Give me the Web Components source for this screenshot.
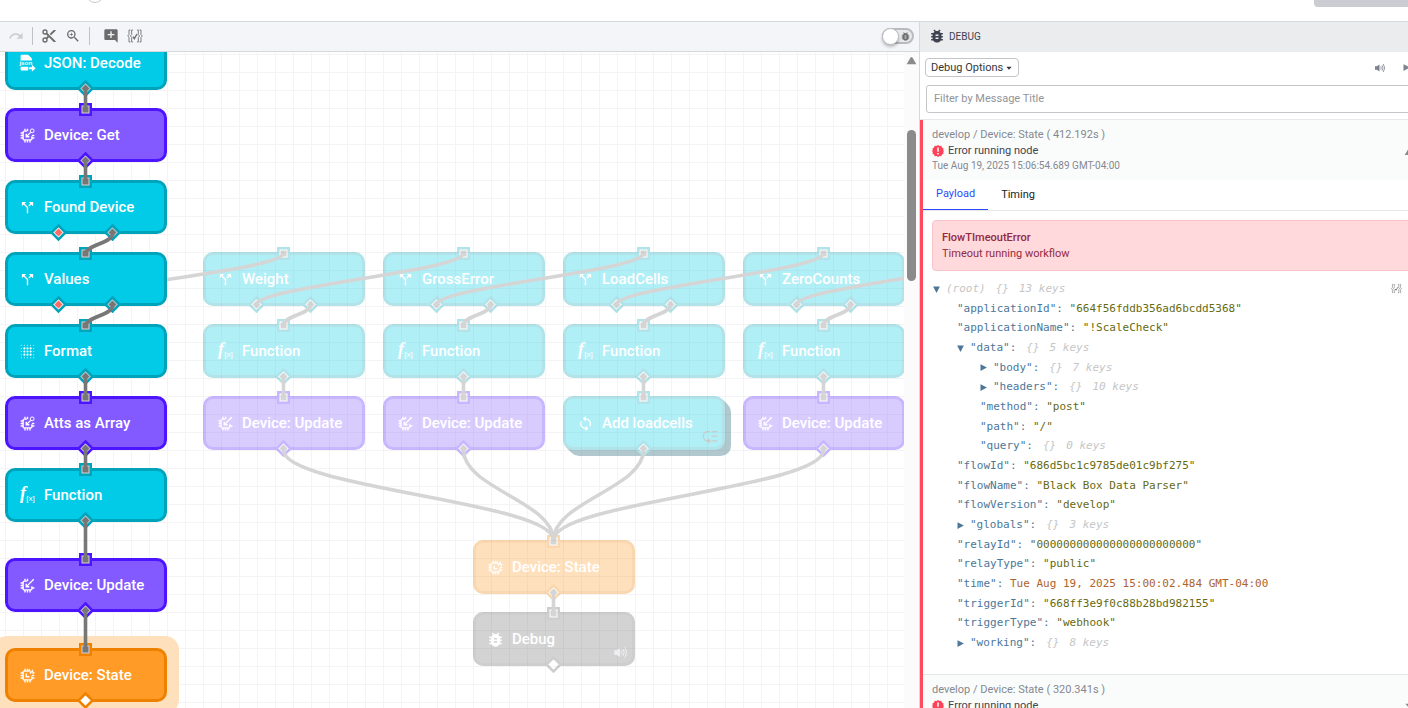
<!DOCTYPE html>
<html lang="en">
<head>
<meta charset="utf-8">
<title>Workflow editor</title>
<style>
  html, body { height: 100%; margin: 0; }
  body {
    font-family: Roboto, "Noto Sans", sans-serif;
    font-size: 11px;
    color: #3f4350;
    overflow: hidden;
  }
</style>
</head>
<body>
<workflow-app></workflow-app>

<script>
const ICONS = {
  redo: '<path d="M18.4 10.6C16.55 9 14.15 8 11.5 8 6.85 8 2.92 11.03 1.54 15.22L3.9 16C4.95 12.81 7.95 10.5 11.5 10.5c1.95 0 3.73.72 5.12 1.88L13 16h9V7z"/>',
  cut: '<path d="M19 3l-6 6 2 2 7-7V3M12 12.5a.5.5 0 1 1 0-1 .5.5 0 0 1 0 1M6 20a2 2 0 1 1 0-4 2 2 0 0 1 0 4M6 8a2 2 0 1 1 0-4 2 2 0 0 1 0 4m3.64-.36C9.87 7.14 10 6.59 10 6a4 4 0 1 0-4 4c.59 0 1.14-.13 1.64-.36L10 12l-2.36 2.36C7.14 14.13 6.59 14 6 14a4 4 0 1 0 4 4c0-.59-.13-1.14-.36-1.64L12 14l7 7h3v-1z"/>',
  zoom: '<path d="M15.5 14l5 5-1.5 1.5-5-5v-.79l-.27-.28A6.5 6.5 0 1 1 14.43 13.73l.28.27h.79M9.5 14a4.5 4.5 0 1 0 0-9 4.5 4.5 0 0 0 0 9m2.5-4h-2v2H9v-2H7V9h2V7h1v2h2z"/>',
  comment: '<path d="M22 4c0-1.1-.9-2-2-2H4c-1.1 0-2 .9-2 2v12c0 1.1.9 2 2 2h14l4 4V4zm-5 7h-4v4h-2v-4H7V9h4V5h2v4h4v2z"/>',
  braces: '<g fill="none" stroke="currentColor" stroke-width="1.3"><path d="M5 3H3v7l-2 2 2 2v7h2M9 3H7v7l-2 2 2 2v7h2M19 3h2v7l2 2-2 2v7h-2M15 3h2v7l2 2-2 2v7h-2"/><path d="M9 13l2 3 4-7" stroke-width="2"/></g>',
  bug: '<path transform="translate(-3 -3) scale(1.25)" d="M14 12h-4v-2h4m0 6h-4v-2h4m6-6h-2.81a6 6 0 0 0-1.82-1.96L17 4.41 15.59 3l-2.17 2.17a6 6 0 0 0-2.83 0L8.41 3 7 4.41l1.62 1.63A6 6 0 0 0 6.81 8H4v2h2.09A6 6 0 0 0 6 11v1H4v2h2v1c0 .34.04.67.09 1H4v2h2.81a6 6 0 0 0 10.38 0H20v-2h-2.09c.05-.33.09-.66.09-1v-1h2v-2h-2v-1c0-.34-.04-.67-.09-1H20z"/>',
  split: '<path d="M14 3l2.6 2.6-3.2 3.2 1.5 1.5 3.2-3.2L21 10V3M10 3H3v7l2.7-2.7 5.2 5.2V21h2.2v-9.4L7.3 5.6"/>',
  sync: '<path transform="translate(-1 -1) scale(1.1)" d="M12 18a6 6 0 0 1-6-6c0-1 .25-1.97.7-2.8L5.24 7.74A8 8 0 0 0 12 20v3l4-4-4-4m0-11V1L8 5l4 4V6a6 6 0 0 1 5.3 8.8l1.46 1.46A8 8 0 0 0 12 4z"/>',
  volume: '<path d="M2 8.5v7h3.5L11 19V5L5.5 8.5z"/><g fill="none" stroke="currentColor" stroke-width="1.6"><path d="M13.5 9q2 3 0 6M16 6.5q4 5.5 0 11M18.5 4q6 8 0 16"/></g>',
  play: '<path d="M4 3v18l17-9z"/>',
  blur: '<g>' + [2, 7, 12, 17, 22].map((y, r) => [2, 7, 12, 17, 22].map((x, c) => {
    const far = Math.max(Math.abs(r - 2), Math.abs(c - 2));
    return `<circle cx="${x}" cy="${y}" r="${far === 2 ? 0.8 : 1.7}"/>`;
  }).join('')).join('') + '</g>',
  fx: '<text x="0" y="18" font-family="Liberation Serif, serif" font-style="italic" font-weight="700" font-size="29">f</text><text x="10" y="21" font-family="Liberation Sans, sans-serif" font-size="13">[x]</text>',
  json: '<path d="M2 -2h11l6 6v3H1V-1zM1 17h12v6H2l-1-1z"/><path d="M14 18h5v-4l6 5.5-6 5.5v-4h-5z"/><text x="-1" y="15" font-family="Liberation Sans, sans-serif" font-weight="700" font-size="10">json</text>',
  list: '<g fill="none" stroke="currentColor" stroke-width="2"><path d="M11 4H7a6 7 0 0 0 0 15h3M14 4h9M14 11.5h9M14 19h9"/></g><path d="M8 14.5l5 4.5-5 4.5z"/>',
  error: '<path d="M12 0l3 2 3.5-.5L20 5l3 2-.5 3.5L24 12l-1.5 2 .5 3.5-3 1.5-1.5 3.5L15 22l-3 2-3-2-3.5.5L4 19l-3-1.5.5-3.5L0 12l1.5-1.5L1 7l3-2 1.5-3.5L9 2z"/><path d="M10.5 5h3v8.500h-3zM10.5 16h3v3h-3z" fill="#fff"/>',
  caretUp: '<path d="M3 19L10 7q2-3 4 0l7 12z"/>',
  caretDown: '<path d="M4 8h16l-8 9z"/>',
  fold: '<path d="M3 4h18l-9 17z"/>'
};

// every device icon is the same chip, with a different mark in its top corner
const chip = mark => `<g fill="none" stroke="currentColor" stroke-width="2.2"><path d="M11 5H7a2 2 0 0 0-2 2v10a2 2 0 0 0 2 2h10a2 2 0 0 0 2-2v-4M10 9v5h5M8 5V1M12 5V1M8 19v4M12 19v4M16 19v4M5 8H1M5 12H1M5 16H1M19 16h4"/>${mark}</g>`;
ICONS.get = chip('<path d="M11 13l6-6"/><circle cx="19.5" cy="4.5" r="3" stroke-width="1.6"/><path d="M19 12h4"/>');
ICONS.update = chip('<path d="M11 13L22 2"/>');
ICONS.state = chip('<path d="M12 6l3-3 2 5 3-4 1 5 2-2M19 12h4" stroke-width="1.8"/>');

class UiIcon extends HTMLElement {
  connectedCallback() {
    if (this.shadowRoot) return;
    this.attachShadow({ mode: 'open' }).innerHTML = `
      <style>
        :host { display: inline-block; width: 16px; height: 16px; flex: none; white-space: normal; }
        svg { display: block; width: 100%; height: 100%; fill: currentColor; overflow: visible; }
      </style>
      <svg viewBox="0 0 24 24" aria-hidden="true">${ICONS[this.getAttribute('name')]}</svg>`;
  }
}
customElements.define('ui-icon', UiIcon);

class EditorToolbar extends HTMLElement {
  constructor() {
    super();
    this.attachShadow({ mode: 'open' }).innerHTML = `
      <style>
        :host {
          display: flex;
          align-items: center;
          box-sizing: border-box;
          height: 30px;
          padding: 0 5px 1px 0;
          background: #f4f5f8;
          border-bottom: 1px solid #d6d8dc;
          color: #6b6b6b;
        }
        .group { display: flex; padding: 0 4px; }
        .group.wide { padding-left: 9px; }
        .group:first-child { padding: 0 10px 0 0; }
        button {
          display: flex;
          justify-content: center;
          width: 24px;
          padding: 0;
          border: 0;
          background: none;
          color: inherit;
        }
        button:disabled { color: #cdced1; }
        .group:first-child button { width: 22px; }
        .line { width: 1px; height: 18px; background: #bfc1c4; }
        label {
          position: relative;
          display: flex;
          align-items: center;
          justify-content: flex-end;
          box-sizing: border-box;
          width: 32px;
          height: 16px;
          margin-left: auto;
          padding-right: 2px;
          border: 2px solid #b9babd;
          border-radius: 8px;
          background: #e9eaec;
        }
        label ui-icon { width: 9px; height: 9px; }
        input {
          position: absolute;
          left: -2px;
          top: -2px;
          width: 17px;
          height: 17px;
          margin: 0;
          appearance: none;
          border: 1px solid #b9babd;
          border-radius: 50%;
          background: #fff;
          box-shadow: 0 2px 3px rgba(0, 0, 0, .25);
        }
      </style>
      <div class="group"><button disabled aria-label="Redo"><ui-icon name="redo"></ui-icon></button></div>
      <div class="line"></div>
      <div class="group">
        <button aria-label="Cut"><ui-icon name="cut"></ui-icon></button>
        <button aria-label="Zoom in"><ui-icon name="zoom"></ui-icon></button>
      </div>
      <div class="line"></div>
      <div class="group wide">
        <button aria-label="Add note"><ui-icon name="comment"></ui-icon></button>
        <button aria-label="Variables"><ui-icon name="braces"></ui-icon></button>
      </div>
      <label><input type="checkbox" aria-label="Live debug"><ui-icon name="bug"></ui-icon></label>`;
  }
}
customElements.define('editor-toolbar', EditorToolbar);

class FlowNode extends HTMLElement {
  connectedCallback() {
    if (this.shadowRoot) return;
    this.style.left = `${this.getAttribute('x')}px`;
    this.style.top = `${this.getAttribute('y')}px`;
    const outs = (this.getAttribute('outs') || 'on').split(' ');
    const badge = this.getAttribute('badge');
    const root = this.attachShadow({ mode: 'open' });
    root.innerHTML = `
      <style>
        :host {
          --fill: #02cbe7;
          --edge: #00a4ba;
          --ring: #d4d4d4;
          position: absolute;
          width: 162px;
          height: 54px;
        }
        :host([kind=device]) { --fill: #825aff; --edge: #4d14ff; }
        :host([kind=output]) { --fill: #ff9b26; --edge: #ee8100; }
        :host([kind=debug]) { --fill: #707070; --edge: #606060; }
        :host([ghost]) { --ring: #fff; opacity: .3; }
        :host([selected])::before {
          content: "";
          position: absolute;
          inset: -12px;
          border-radius: 14px;
          background: #ffe0bd;
        }
        .card {
          position: relative;
          display: flex;
          align-items: center;
          gap: 9px;
          box-sizing: border-box;
          height: 100%;
          padding-left: 12px;
          border: 3px solid var(--edge);
          border-radius: 10px;
          background: var(--fill);
          color: #fff;
          font-size: 15px;
          font-weight: 500;
          white-space: nowrap;
        }
        :host([stacked]) .card {
          box-shadow: 1px 1px #005060, 2px 2px #005060, 3px 3px #005060,
            4px 4px #005060, 5px 5px #005060, 6px 6px #005060;
        }
        .card ui-icon { width: 15px; height: 15px; }
        .card .badge {
          position: absolute;
          right: 4px;
          bottom: 3px;
          color: ${badge === 'list' ? '#555' : '#cfd2dc'};
        }
        svg { position: absolute; width: 17px; height: 17px; stroke: var(--edge); stroke-width: 2.5; fill: var(--ring); }
        svg .dot { stroke: none; fill: #777; }
        svg .empty { fill: #fff; }
        svg .light { fill: #fff; }
        svg .red { fill: #ff6b62; }
        .in { left: 72px; top: -7px; }
        .out { left: 72px; top: 44px; }
        .pair.out { left: 45px; }
        .pair.out ~ .pair.out { left: 99px; }
      </style>
      <div class="card">
        <ui-icon name="${this.getAttribute('icon')}"></ui-icon>
        <slot></slot>
        ${badge ? `<ui-icon class="badge" name="${badge}"></ui-icon>` : ''}
      </div>
      <svg class="in" viewBox="0 0 17 17"><path d="M3.25 3.25h10.5v10.5h-10.5z"/><path class="dot" d="M5.5 5.5h6v6h-6z"/></svg>
      ${outs.map(out => `
        <svg class="out ${outs.length > 1 ? 'pair' : ''}" viewBox="0 0 17 17">
          <path class="${out === 'on' ? '' : 'light'}" d="M8.5 1.5l7 7-7 7-7-7z"/>
          ${out === 'empty' ? '' : `<path class="dot ${out}" d="M8.5 4.5l4 4-4 4-4-4z"/>`}
        </svg>`).join('')}`;
  }
}
customElements.define('flow-node', FlowNode);

class FlowCanvas extends HTMLElement {
  constructor() {
    super();
    const columns = [
      [203, 'Weight'], [383, 'GrossError'], [563, 'LoadCells'], [743, 'ZeroCounts']
    ];
    const ghosts = columns.map(([x, title]) => `
      <flow-node ghost x="${x}" y="200" icon="split" outs="on on">${title}</flow-node>
      <flow-node ghost x="${x}" y="272" icon="fx">Function</flow-node>
      ${title === 'LoadCells'
        ? `<flow-node ghost stacked x="${x}" y="344" icon="sync" badge="list">Add loadcells</flow-node>`
        : `<flow-node ghost x="${x}" y="344" kind="device" icon="update">Device: Update</flow-node>`}`).join('');

    const ghostWires = columns.map(([x], i) => {
      const mid = x + 80.5;
      return this.up(i ? x - 126.5 : 58.5, mid)
        + this.down(x + 107.5, 253, mid, 273, 9)
        + this.down(mid, 325, mid, 345, 7)
        + this.down(mid, 398, 553.5, 488, 38);
    }).join('') + this.up(796.5, 1003.5) + this.down(553.5, 541, 553.5, 561, 7);

    const liveWires = [[37, 57], [109, 129], [325, 345], [397, 417], [469, 507], [559, 597]]
      .map(([a, b]) => this.down(85.5, a, 85.5, b, 7)).join('')
      + this.down(112.5, 182, 85.5, 202, 9) + this.down(112.5, 254, 85.5, 274, 9);

    this.attachShadow({ mode: 'open' }).innerHTML = `
      <style>
        :host { display: flex; min-height: 0; overflow: hidden; background: #fff; }
        .stage {
          position: relative;
          flex: 1;
          overflow: hidden;
          background:
            linear-gradient(#f4f4f5 1px, transparent 1px) 5px 2px / 18px 18px,
            linear-gradient(90deg, #f4f4f5 1px, transparent 1px) 5px 2px / 18px 18px;
        }
        svg { position: absolute; inset: 0; width: 100%; height: 100%; fill: none; stroke: #777; stroke-width: 3.6; }
        svg.ghost { stroke: #d5d5d5; }
        .scroll {
          display: flex;
          flex-direction: column;
          align-items: center;
          width: 15px;
          background: #fbfbfb;
          color: #8b8b8b;
        }
        .scroll ui-icon { width: 13px; height: 13px; margin: 2px 0 63px; }
        .thumb { width: 9px; height: 151px; border-radius: 5px; background: #8b8b8b; }
      </style>
      <div class="stage">
        ${ghosts}
        <flow-node ghost x="473" y="488" kind="output" icon="state">Device: State</flow-node>
        <flow-node ghost x="473" y="560" kind="debug" icon="bug" outs="empty" badge="volume">Debug</flow-node>
        <svg class="ghost">${ghostWires}</svg>
        <flow-node x="5" y="-16" icon="json">JSON: Decode</flow-node>
        <flow-node x="5" y="56" kind="device" icon="get">Device: Get</flow-node>
        <flow-node x="5" y="128" icon="split" outs="red on">Found Device</flow-node>
        <flow-node x="5" y="200" icon="split" outs="red on">Values</flow-node>
        <flow-node x="5" y="272" icon="blur">Format</flow-node>
        <flow-node x="5" y="344" kind="device" icon="get">Atts as Array</flow-node>
        <flow-node x="5" y="416" icon="fx">Function</flow-node>
        <flow-node x="5" y="506" kind="device" icon="update">Device: Update</flow-node>
        <flow-node selected x="5" y="596" kind="output" icon="state" outs="empty">Device: State</flow-node>
        <svg>${liveWires}</svg>
      </div>
      <div class="scroll"><ui-icon name="caretUp"></ui-icon><div class="thumb"></div></div>`;
  }

  down(x1, y1, x2, y2, bend) {
    return `<path d="M${x1} ${y1}C${x1} ${y1 + bend} ${x2} ${y2 - bend} ${x2} ${y2}"/>`;
  }

  // from the left output of one branch node back up to the next one's input
  up(x1, x2) {
    return `<path d="M${x1} 253C${x1} 235 ${x2} 219 ${x2} 201"/>`;
  }
}
customElements.define('flow-canvas', FlowCanvas);

class JsonTree extends HTMLElement {
  set rows(rows) {
    this.attachShadow({ mode: 'open' }).innerHTML = `
      <style>
        :host {
          display: grid;
          grid-auto-rows: 20px 19px 20px;
          font-family: "DejaVu Sans Mono", monospace;
          font-size: 11px;
          line-height: 20px;
          color: #4d7798;
          white-space: pre;
        }
        div { display: flex; align-items: center; }
        .l1 { padding-left: 24px; }
        .l2 { padding-left: 47px; }
        ui-icon { width: 9px; height: 9px; margin: 0 5px 0 -1px; }
        i { color: #c6c6c6; }
        i + i, .key + i { margin-left: 10px; }
        .string { color: #666a10; }
        .date { color: #ad632c; }
      </style>
      ${rows.map(([level, key, value, type]) => `
        <div class="l${level}">${
          type ? `<ui-icon name="${type === 'open' ? 'fold' : 'play'}"></ui-icon>` : ''
        }${
          level ? `<span class="key">"${key}":</span>` : `<i>${key}</i>`
        }${
          typeof value === 'number' ? `<i>{}</i><i>${value} keys</i>`
            : `<span class="${value.startsWith('"') ? 'string' : 'date'}"> ${value}</span>`
        }</div>`).join('')}`;
  }
}
customElements.define('json-tree', JsonTree);

class DebugMessage extends HTMLElement {
  connectedCallback() {
    if (this.shadowRoot) return;
    const open = this.hasAttribute('open');
    this.attachShadow({ mode: 'open' }).innerHTML = `
      <style>
        :host {
          display: block;
          border-left: 3px solid #ff4a60;
          background: #fff;
        }
        header {
          position: relative;
          height: 53px;
          padding: 7px 9px 0;
          background: #fafcfb;
          line-height: 16px;
        }
        header div { display: flex; align-items: center; gap: 4px; white-space: nowrap; }
        .path, .when { color: #858892; }
        .when { font-size: 10px; line-height: 14px; }
        .error { width: 12px; height: 12px; color: #ff4258; }
        .caret {
          position: absolute;
          right: 3px;
          top: 24px;
          padding: 0;
          border: 0;
          background: none;
          color: #858892;
        }
        .caret ui-icon { display: block; width: 14px; height: 14px; }
      </style>
      <header>
        <div class="path">${this.getAttribute('path')}</div>
        <div><ui-icon class="error" name="error"></ui-icon>Error running node</div>
        <div class="when">${this.getAttribute('when')}</div>
        <button class="caret" aria-label="Toggle message"><ui-icon name="${open ? 'caretUp' : 'caretDown'}"></ui-icon></button>
      </header>
      <slot></slot>`;
  }
}
customElements.define('debug-message', DebugMessage);

class MessageBody extends HTMLElement {
  constructor() {
    super();
    this.attachShadow({ mode: 'open' }).innerHTML = `
      <style>
        :host { display: block; padding-bottom: 21px; border-bottom: 1px solid #e5e7e9; }
        nav { display: flex; height: 30px; border-bottom: 1px solid #e8e8ea; }
        nav button {
          box-sizing: border-box;
          height: 30px;
          padding: 0 13px 2px;
          border: 0;
          background: none;
          font: inherit;
          color: #1b1d24;
        }
        nav .active { border-bottom: 1px solid #2c4bff; color: #2c4bff; }
        .alert {
          margin: 9px 9px 8px;
          padding: 9px 9px 8px;
          border: 1px solid #f8c5c9;
          border-radius: 4px;
          background: #ffd9dc;
          color: #942a3e;
          line-height: 16px;
        }
        .alert strong { display: block; font-weight: 500; }
        .tree { display: flex; justify-content: space-between; padding: 0 18px 0 10px; }
        .tree > ui-icon { width: 11px; height: 11px; margin-top: 4px; color: #777; }
      </style>
      <nav><button class="active">Payload</button><button>Timing</button></nav>
      <div class="alert"><strong>FlowTImeoutError</strong>Timeout running workflow</div>
      <div class="tree"><json-tree></json-tree><ui-icon name="braces"></ui-icon></div>`;
    this.shadowRoot.querySelector('json-tree').rows = [
      [0, '(root)', 13, 'open'],
      [1, 'applicationId', '"664f56fddb356ad6bcdd5368"'],
      [1, 'applicationName', '"!ScaleCheck"'],
      [1, 'data', 5, 'open'],
      [2, 'body', 7, 'closed'],
      [2, 'headers', 10, 'closed'],
      [2, 'method', '"post"'],
      [2, 'path', '"/"'],
      [2, 'query', 0],
      [1, 'flowId', '"686d5bc1c9785de01c9bf275"'],
      [1, 'flowName', '"Black Box Data Parser"'],
      [1, 'flowVersion', '"develop"'],
      [1, 'globals', 3, 'closed'],
      [1, 'relayId', '"000000000000000000000000"'],
      [1, 'relayType', '"public"'],
      [1, 'time', 'Tue Aug 19, 2025 15:00:02.484 GMT-04:00'],
      [1, 'triggerId', '"668ff3e9f0c88b28bd982155"'],
      [1, 'triggerType', '"webhook"'],
      [1, 'working', 8, 'closed']
    ];
  }
}
customElements.define('message-body', MessageBody);

class DebugPanel extends HTMLElement {
  constructor() {
    super();
    this.attachShadow({ mode: 'open' }).innerHTML = `
      <style>
        :host { display: block; overflow: hidden; border-left: 1px solid #d6d8dc; background: #fff; }
        /* the panel runs on a little past the right side of the window */
        .inner { width: calc(100% + 12px); }
        h2 {
          display: flex;
          align-items: center;
          gap: 5px;
          height: 28px;
          margin: 0;
          padding: 0 10px 2px;
          background: #ebecee;
          font-size: 10px;
          font-weight: 400;
          color: #3f4350;
        }
        h2 ui-icon { width: 14px; height: 14px; }
        .bar { display: flex; align-items: center; gap: 16px; padding: 6px 9px 7px 5px; }
        .options {
          display: flex;
          align-items: center;
          gap: 2px;
          height: 19px;
          padding: 0 5px;
          margin-right: auto;
          border: 1px solid #c4c5c9;
          border-radius: 4px;
          background: #fff;
          font: inherit;
          line-height: 16px;
          color: #34363d;
          white-space: nowrap;
        }
        .bar button { box-sizing: border-box; }
        .options ui-icon { width: 8px; height: 8px; }
        .tool { display: flex; padding: 0; border: 0; background: none; color: #7f838d; }
        .tool ui-icon { width: 12px; height: 12px; }
        .tool + .tool ui-icon { width: 9px; height: 9px; }
        .filter { padding: 1px 6px 6px; border-bottom: 1px solid #e5e7e9; }
        input {
          display: block;
          box-sizing: border-box;
          width: 100%;
          height: 28px;
          padding: 0 7px 2px;
          border: 1px solid #c4c5c9;
          border-radius: 3px;
          font: inherit;
        }
        input::placeholder { color: #92949a; opacity: 1; }
      </style>
      <div class="inner">
        <h2><ui-icon name="bug"></ui-icon>DEBUG</h2>
        <div class="bar">
          <button class="options">Debug Options<ui-icon name="caretDown"></ui-icon></button>
          <button class="tool" aria-label="Sound"><ui-icon name="volume"></ui-icon></button>
          <button class="tool" aria-label="Resume"><ui-icon name="play"></ui-icon></button>
        </div>
        <div class="filter"><input type="text" placeholder="Filter by Message Title" aria-label="Filter by Message Title"></div>
        <debug-message open path="develop / Device: State ( 412.192s )" when="Tue Aug 19, 2025 15:06:54.689 GMT-04:00">
          <message-body></message-body>
        </debug-message>
        <debug-message path="develop / Device: State ( 320.341s )" when=""></debug-message>
      </div>`;
  }
}
customElements.define('debug-panel', DebugPanel);

class WorkflowApp extends HTMLElement {
  constructor() {
    super();
    this.attachShadow({ mode: 'open' }).innerHTML = `
      <style>
        :host {
          display: grid;
          grid-template: 22px minmax(0, 1fr) / minmax(0, 1fr) 489px;
          height: 100vh;
        }
        .top {
          grid-column: 1 / -1;
          display: flex;
          align-items: flex-end;
          justify-content: space-between;
          box-sizing: border-box;
          overflow: hidden;
          padding-left: 86px;
          border-bottom: 1px solid #d6d8dc;
        }
        .dot {
          box-sizing: border-box;
          width: 18px;
          height: 18px;
          margin-bottom: 18px;
          border: 1px solid #c9cace;
          border-radius: 50%;
        }
        .top button {
          width: 94px;
          height: 28px;
          margin-bottom: 14px;
          border: 0;
          border-radius: 4px 0 0 4px;
          background: #cbccd1;
        }
        main { display: flex; flex-direction: column; min-width: 0; }
        flow-canvas { flex: 1; }
      </style>
      <div class="top"><span class="dot"></span><button aria-label="Save and deploy"></button></div>
      <main>
        <editor-toolbar></editor-toolbar>
        <flow-canvas></flow-canvas>
      </main>
      <debug-panel></debug-panel>`;
  }
}
customElements.define('workflow-app', WorkflowApp);
</script>
</body>
</html>
